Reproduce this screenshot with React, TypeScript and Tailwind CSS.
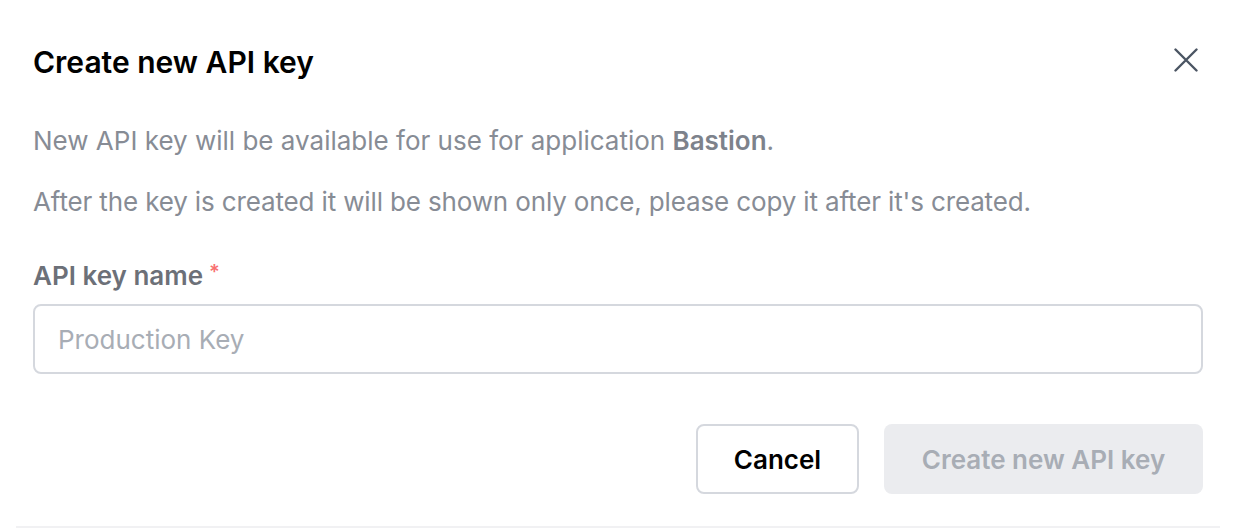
import React from "react";

export default function App() {
  return (
    <div
      className="w-[1236px] h-[528px] bg-white flex flex-col overflow-hidden"
      style={{ fontFamily: "Inter, 'Noto Sans', sans-serif" }}
    >
      <div className="flex flex-col px-[33px] pt-[44px] flex-1">
        <div className="flex items-center justify-between h-[36px]">
          <h2 className="text-[30px] leading-[36px] font-semibold text-black">
            Create new API key
          </h2>
          <button className="w-[24px] h-[24px] flex items-center justify-center mr-[5px] mt-[-5px] text-[#4b5563]">
            <svg width="24" height="24" viewBox="0 0 24 24" fill="none" stroke="currentColor" strokeWidth="2.4" strokeLinecap="round">
              <path d="M1.5 1.5L22.5 22.5M22.5 1.5L1.5 22.5" />
            </svg>
          </button>
        </div>
        <p className="mt-[45px] text-[26px] leading-[32px] text-[#878c95]">
          New API key will be available for use for application <span className="font-semibold text-[#7d828b]">Bastion</span>.
        </p>
        <p className="mt-[29px] text-[26px] leading-[32px] text-[#878c95] tracking-[-0.14px]">
          After the key is created it will be shown only once, please copy it after it's created.
        </p>
        <label className="mt-[42px] text-[26px] leading-[32px] font-semibold text-[#6c7078] flex items-start">
          API key name
          <span className="text-[#f87171] text-[20px] leading-[20px] ml-[6px] mt-[2px]">*</span>
        </label>
        <div className="mt-[12px] w-[1170px] h-[70px] border-2 border-[#d5d8de] rounded-[8px] flex items-center px-[23px]">
          <span className="text-[26px] text-[#a8adb5]">Production Key</span>
        </div>
        <div className="mt-[50px] flex justify-end gap-[25px] w-[1170px]">
          <button className="w-[163px] h-[70px] border-2 border-[#d5d8de] rounded-[8px] text-[26px] font-semibold text-black bg-white">
            Cancel
          </button>
          <button className="w-[319px] h-[70px] rounded-[8px] bg-[#ebecef] text-[26px] font-semibold text-[#a8adb5]">
            Create new API key
          </button>
        </div>
      </div>
      <div className="mx-[16px] h-[2px] bg-[#f1f1f3]" />
    </div>
  );
}
